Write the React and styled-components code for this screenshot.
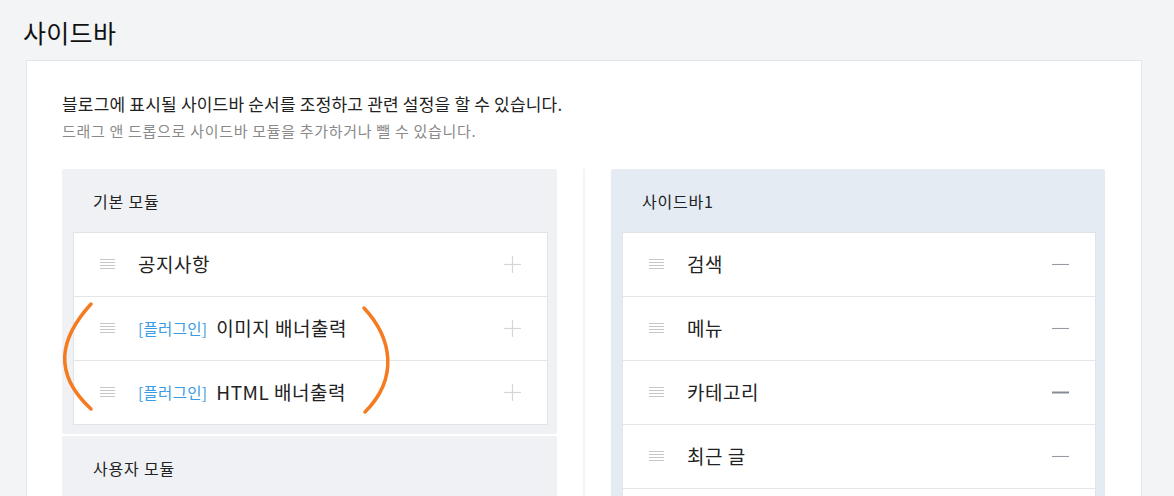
import React from "react";
import styled, { createGlobalStyle } from "styled-components";

const Global = createGlobalStyle`
  html, body { margin: 0; padding: 0; overflow: hidden; }
  body {
    background: #f3f4f6;
    font-family: "Noto Sans CJK KR", "Noto Sans", sans-serif;
    color: #222;
  }
`;

const Page = styled.div`
  width: 1174px;
`;

const Title = styled.h1`
  margin: 0;
  padding: 14px 0 10px 23px;
  font-size: 25px;
  letter-spacing: 0.3px;
  line-height: 36px;
  font-weight: 400;
  color: #111;
`;

const Card = styled.section`
  margin-left: 26px;
  width: 1116px;
  box-sizing: border-box;
  background: #fff;
  border: 1px solid #e3e6ed;
  padding: 31px 36px 0 35px;
`;

const Lead = styled.p`
  margin: 0;
  font-size: 17px;
  letter-spacing: 0.2px;
  line-height: 24px;
  color: #222;
`;

const Sub = styled.p`
  margin: 4px 0 0;
  font-size: 15px;
  letter-spacing: 0.7px;
  line-height: 22px;
  color: #8a8a8a;
`;

const Columns = styled.div`
  margin-top: 27px;
  display: grid;
  grid-template-columns: 495px 2px 494px;
  column-gap: 26px;
  align-items: start;
`;

const Column = styled.div`
  display: flex;
  flex-direction: column;
  gap: 2px;
`;

const Divider = styled.div`
  align-self: stretch;
  background: #f2f3f5;
  min-height: 400px;
`;

const Panel = styled.div`
  background: ${(p) => (p.$active ? "#e4ebf3" : "#eff1f5")};
  padding: 0 9px 9px 10px;
  border-radius: 2px;
`;

const PanelTitle = styled.div`
  padding: 21px 0 19px 21px;
  font-size: 16px;
  letter-spacing: 0.8px;
  line-height: 23px;
  color: #222;
`;

const List = styled.ul`
  position: relative;
  list-style: none;
  margin: 0 0 0 1px;
  padding: 0;
  background: #fff;
  border: 1px solid #e0e3e8;
`;

const Row = styled.li`
  display: flex;
  align-items: center;
  height: 63px;
  padding: 0 26px;
  border-top: ${(p) => (p.$first ? "none" : "1px solid #e3e5ea")};
`;

const Handle = styled.svg`
  flex: none;
  width: 15px;
  height: 10px;
  margin-right: 23px;
  margin-top: -1px;
`;

const Label = styled.span`
  flex: 1;
  font-size: 19px;
  letter-spacing: 0.5px;
  line-height: 26px;
  color: #222;
  display: flex;
  align-items: center;
  margin-top: -1px;
`;

const Tag = styled.span`
  font-size: 15.5px;
  letter-spacing: 0.3px;
  color: #3a9be3;
  margin-right: 9px;
`;

const Action = styled.svg`
  flex: none;
  width: 17px;
  height: 17px;
`;

const Marks = styled.svg`
  position: absolute;
  left: 0;
  top: 0;
  width: 100%;
  height: 100%;
  overflow: visible;
  pointer-events: none;
`;

const DragIcon = () => (
  <Handle viewBox="0 0 15 10">
    {[0.5, 3.5, 6.5, 9.5].map((y) => (
      <line key={y} x1="0" x2="15" y1={y} y2={y} stroke="#c6c6c6" strokeWidth="1" />
    ))}
  </Handle>
);

const Plus = () => (
  <Action viewBox="0 0 17 17">
    <line x1="0" x2="17" y1="8.5" y2="8.5" stroke="#d6d6d6" strokeWidth="1.2" />
    <line x1="8.5" x2="8.5" y1="0" y2="17" stroke="#d6d6d6" strokeWidth="1.2" />
  </Action>
);

const Minus = ({ bold }) => (
  <Action viewBox="0 0 17 17">
    <line
      x1="0"
      x2="17"
      y1="8.5"
      y2="8.5"
      stroke={bold ? "#858b94" : "#979ca3"}
      strokeWidth={bold ? 2 : 1.1}
    />
  </Action>
);

const basic = [
  { name: "공지사항" },
  { tag: "[플러그인]", name: "이미지 배너출력" },
  { tag: "[플러그인]", name: "HTML 배너출력" },
];

const sidebar = [
  { name: "검색" },
  { name: "메뉴" },
  { name: "카테고리", bold: true },
  { name: "최근 글" },
  { name: "최근 댓글" },
];

export default function App() {
  return (
    <Page>
      <Global />
      <Title>사이드바</Title>
      <Card>
        <Lead>블로그에 표시될 사이드바 순서를 조정하고 관련 설정을 할 수 있습니다.</Lead>
        <Sub>드래그 앤 드롭으로 사이드바 모듈을 추가하거나 뺄 수 있습니다.</Sub>
        <Columns>
          <Column>
            <Panel>
              <PanelTitle>기본 모듈</PanelTitle>
              <List>
                {basic.map((m, i) => (
                  <Row key={m.name} $first={i === 0}>
                    <DragIcon />
                    <Label>
                      {m.tag && <Tag>{m.tag}</Tag>}
                      {m.name}
                    </Label>
                    <Plus />
                  </Row>
                ))}
                <Marks>
                  <path
                    d="M17 71 C -14 105, -22 140, 17 176"
                    fill="none"
                    stroke="#f47b20"
                    strokeWidth="3.5"
                    strokeLinecap="round"
                  />
                  <path
                    d="M290 75 C 318 105, 325 145, 291 179"
                    fill="none"
                    stroke="#f47b20"
                    strokeWidth="3.5"
                    strokeLinecap="round"
                  />
                </Marks>
              </List>
            </Panel>
            <Panel>
              <PanelTitle>사용자 모듈</PanelTitle>
              <List>
                <Row $first>
                  <DragIcon />
                  <Label>방문자 수</Label>
                  <Plus />
                </Row>
              </List>
            </Panel>
          </Column>
          <Divider />
          <Column>
            <Panel $active>
              <PanelTitle>사이드바1</PanelTitle>
              <List>
                {sidebar.map((m, i) => (
                  <Row key={m.name} $first={i === 0}>
                    <DragIcon />
                    <Label>{m.name}</Label>
                    <Minus bold={m.bold} />
                  </Row>
                ))}
              </List>
            </Panel>
          </Column>
        </Columns>
      </Card>
    </Page>
  );
}
